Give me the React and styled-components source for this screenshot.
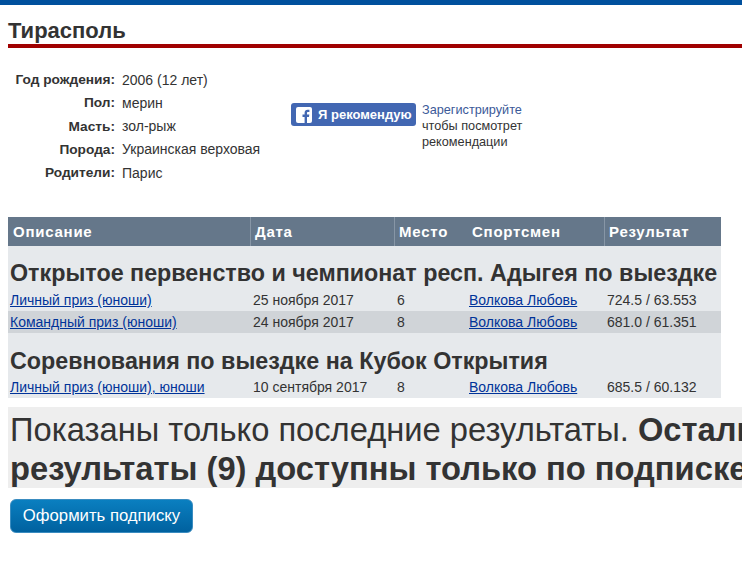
import React from "react";
import styled, { createGlobalStyle } from "styled-components";

const GlobalStyle = createGlobalStyle`
  html, body {
    margin: 0;
    padding: 0;
    background: #fff;
    overflow: hidden;
  }
  body {
    width: 742px;
    height: 578px;
    font-family: "Liberation Sans", Arial, sans-serif;
    font-size: 14px;
    color: #333;
  }
`;

const TopBar = styled.div`
  height: 5px;
  background-color: #00509d;
`;

const Page = styled.div`
  padding: 0 0 0 8px;
`;

const Title = styled.h1`
  margin: 14px 0 0;
  height: 25px;
  font-size: 22px;
  line-height: 24px;
  font-weight: bold;
  color: #333;
  border-bottom: 4px solid #a00000;
`;

const Summary = styled.div`
  display: flex;
  margin-top: 20px;
`;

const InfoGrid = styled.dl`
  display: grid;
  grid-template-columns: 107px auto;
  grid-auto-rows: 23.25px;
  column-gap: 7px;
  margin: 0;
  width: 283px;
  align-items: center;
`;

const InfoLabel = styled.dt`
  font-size: 13.7px;
  font-weight: bold;
  text-align: right;
`;

const InfoValue = styled.dd`
  margin: 0;
`;

const Recommend = styled.div`
  display: flex;
  align-items: flex-start;
  gap: 6px;
  margin-top: 34px;
`;

const FbButton = styled.div`
  display: flex;
  align-items: center;
  gap: 6px;
  box-sizing: border-box;
  width: 125px;
  height: 23px;
  margin-top: 1px;
  padding-left: 5px;
  background-color: #4267b2;
  border-radius: 3px;
  color: #fff;
  font-size: 13px;
  font-weight: bold;
  white-space: nowrap;
`;

const RecommendText = styled.div`
  font-size: 12.7px;
  line-height: 16px;
  color: #333;
`;

const RegisterLink = styled.a`
  display: block;
  color: #3b5998;
`;

const ResultsTable = styled.table`
  width: 713px;
  margin-top: 33px;
  border-collapse: separate;
  border-spacing: 0;
  table-layout: fixed;
  background-color: #e6e9ec;
`;

const HeadCell = styled.th`
  height: 29px;
  padding: 0 0 0 ${(p) => p.$indent || 4}px;
  background-color: #65778a;
  border-left: 1px solid ${(p) => (p.$sep ? "#8796a6" : "#65778a")};
  color: #fff;
  font-size: 15px;
  font-weight: bold;
  letter-spacing: 0.75px;
  text-align: left;
`;

const GroupCell = styled.td`
  height: 43px;
  padding: 0 0 ${(p) => p.$lift}px 2px;
  box-sizing: border-box;
  font-size: 23.3px;
  font-weight: bold;
  color: #333;
  white-space: nowrap;
  vertical-align: bottom;
  line-height: 30px;
`;

const Row = styled.tr`
  background-color: ${(p) => (p.$alt ? "#d0d4d8" : "transparent")};
`;

const Cell = styled.td`
  height: 22px;
  padding: 0 0 0 ${(p) => p.$indent || 2}px;
  white-space: nowrap;
`;

const TableLink = styled.a`
  color: #003399;
  text-decoration: underline;
`;

const Notice = styled.div`
  margin-top: 9px;
  width: 760px;
  padding: 3px 0 0 2px;
  background-color: #eeeeee;
  font-size: 32.7px;
  line-height: 39px;
  white-space: nowrap;
  color: #333;
`;

const SubscribeButton = styled.button`
  display: block;
  box-sizing: border-box;
  width: 183px;
  height: 34px;
  margin: 11px 0 0 2px;
  padding: 0;
  background: linear-gradient(to bottom, #0a7fc0, #00619f);
  border: 1px solid #3a8cc0;
  border-radius: 6px;
  color: #fff;
  font-family: inherit;
  font-size: 16.7px;
`;

const results = [
  {
    group: "Открытое первенство и чемпионат респ. Адыгея по выездке",
    lift: 1,
    rows: [
      ["Личный приз (юноши)", "25 ноября 2017", "6", "724.5 / 63.553"],
      ["Командный приз (юноши)", "24 ноября 2017", "8", "681.0 / 61.351"],
    ],
  },
  {
    group: "Соревнования по выездке на Кубок Открытия",
    lift: 0,
    rows: [["Личный приз (юноши), юноши", "10 сентября 2017", "8", "685.5 / 60.132"]],
  },
];

const info = [
  ["Год рождения:", "2006 (12 лет)"],
  ["Пол:", "мерин"],
  ["Масть:", "зол-рыж"],
  ["Порода:", "Украинская верховая"],
  ["Родители:", "Парис"],
];

const FbIcon = () => (
  <svg width="16" height="16" viewBox="0 0 16 16">
    <rect width="16" height="16" rx="2" fill="#fff" />
    <path
      d="M11 16v-6h2l.3-2.400H11V6.100c0-.7.2-1.200 1.200-1.200h1.200V2.800c-.2 0-1-.1-1.800-.1-1.800 0-3 1.100-3 3.100v1.800H6.500V10h2.100v6z"
      fill="#4267b2"
    />
  </svg>
);

export default function App() {
  return (
    <>
      <GlobalStyle />
      <TopBar />
      <Page>
        <Title>Тирасполь</Title>
        <Summary>
          <InfoGrid>
            {info.map(([label, value]) => (
              <React.Fragment key={label}>
                <InfoLabel>{label}</InfoLabel>
                <InfoValue>{value}</InfoValue>
              </React.Fragment>
            ))}
          </InfoGrid>
          <Recommend>
            <FbButton>
              <FbIcon />Я рекомендую
            </FbButton>
            <RecommendText>
              <RegisterLink>Зарегистрируйте</RegisterLink>
              чтобы посмотрет
              <br />
              рекомендации
            </RecommendText>
          </Recommend>
        </Summary>
        <ResultsTable>
          <colgroup>
            <col width="242" />
            <col width="144" />
            <col width="71" />
            <col width="139" />
            <col width="117" />
          </colgroup>
          <thead>
            <tr>
              <HeadCell>Описание</HeadCell>
              <HeadCell $sep>Дата</HeadCell>
              <HeadCell $sep>Место</HeadCell>
              <HeadCell $indent={6}>Спортсмен</HeadCell>
              <HeadCell $sep>Результат</HeadCell>
            </tr>
          </thead>
          <tbody>
            {results.map((section) => (
              <React.Fragment key={section.group}>
                <tr>
                  <GroupCell colSpan={5} $lift={section.lift}>
                    {section.group}
                  </GroupCell>
                </tr>
                {section.rows.map((r, i) => (
                  <Row key={r[0]} $alt={i === 1}>
                    <Cell>
                      <TableLink>{r[0]}</TableLink>
                    </Cell>
                    <Cell $indent={3}>{r[1]}</Cell>
                    <Cell $indent={3}>{r[2]}</Cell>
                    <Cell $indent={4}>
                      <TableLink>Волкова Любовь</TableLink>
                    </Cell>
                    <Cell $indent={3}>{r[3]}</Cell>
                  </Row>
                ))}
              </React.Fragment>
            ))}
          </tbody>
        </ResultsTable>
        <Notice>
          Показаны только последние результаты. <b>Остальные</b>
          <br />
          <b>результаты (9) доступны только по подписке</b>
        </Notice>
        <SubscribeButton>Оформить подписку</SubscribeButton>
      </Page>
    </>
  );
}
